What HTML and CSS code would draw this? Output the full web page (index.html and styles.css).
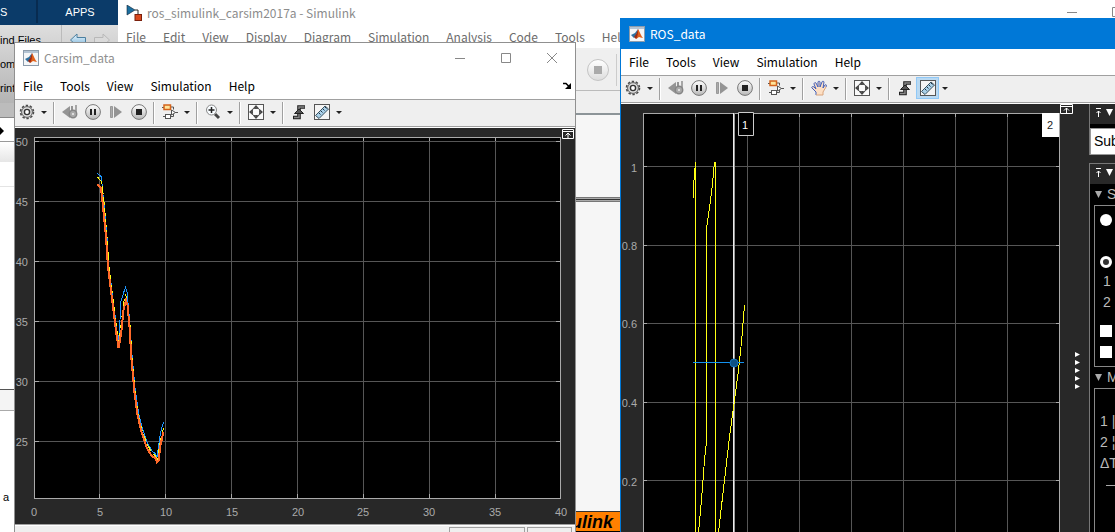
FILE: index.html
```html
<!DOCTYPE html>
<html lang="en">
<head>
<meta charset="utf-8">
<title>ros_simulink_carsim2017a - Simulink</title>
<link rel="stylesheet" href="styles.css">
</head>
<body>
<svg class="defs" aria-hidden="true">
  <defs>
    <linearGradient id="btn" x2="0" y2="1"><stop offset="0" stop-color="#fff"/><stop offset="1" stop-color="#b8b8b8"/></linearGradient>
    <linearGradient id="blue" x2="0" y2="1"><stop offset="0" stop-color="#e8f6ff"/><stop offset="1" stop-color="#7fb4d8"/></linearGradient>
    <symbol id="matlab" viewBox="0 0 16 16"><rect x=".5" y=".5" width="15" height="15" fill="#f4f6f8" stroke="#8c9cac"/><path d="M1 1h14v2H1z" fill="#b4c4d4"/><path d="M2 9l4-2 3-4-2 7-2 2z" fill="#2d6f9e"/><path d="M9 3c-1 3-2 6-4 8l2 2c2-1 3-4 3-7z" fill="#9c2a12"/><path d="M9 3c2 3 3 7 5 9-2 0-3-1-4-1l-3 2c2-3 2-6 2-10z" fill="#e0601a"/></symbol>
    <symbol id="gear" viewBox="0 0 16 16"><circle cx="8" cy="8" r="6.500" fill="none" stroke="#4a4a4a" stroke-width="1.600" stroke-dasharray="2.4 1.68"/><circle cx="8" cy="8" r="5.400" fill="#ddd" stroke="#5a5a5a"/><circle cx="8" cy="8" r="2.600" fill="#fff" stroke="#333" stroke-width="1.400"/></symbol>
    <symbol id="back" viewBox="0 0 16 16"><path d="M0 8l8-6v12z" fill="#949494"/><path d="M9 2h2v5H9z" fill="#949494"/><path d="M13 1h2v7h-2z" fill="#a6a6a6"/><circle cx="11" cy="10" r="3.700" fill="#aaa" stroke="#858585" stroke-width="1.500"/><circle cx="11" cy="10" r="1" fill="#eee"/></symbol>
    <symbol id="pause" viewBox="0 0 16 16"><circle cx="8" cy="8" r="7.400" fill="url(#btn)" stroke="#777"/><path d="M5 5h2v6H5zM9 5h2v6H9z" fill="#222"/></symbol>
    <symbol id="step" viewBox="0 0 16 16"><path d="M2.500 2.500h2v11h-2z" fill="#aaa" stroke="#999"/><path d="M6 2l8 6-8 6z" fill="#949494"/></symbol>
    <symbol id="stop" viewBox="0 0 16 16"><circle cx="8" cy="8" r="7.400" fill="url(#btn)" stroke="#777"/><path d="M5 5h6v6H5z" fill="#222"/></symbol>
    <symbol id="blocks" viewBox="0 0 16 16"><path d="M8 3h3.500v2.500M13 8.500h3M11.500 10v2.500H8M1 12.500h3M0 3.500h2" fill="none" stroke="#555"/><rect x="2" y="1" width="6.500" height="4.500" fill="#ffe49a" stroke="#d4641c" stroke-width="1.500"/><rect x="3.500" y="10.500" width="5" height="4" fill="#fff" stroke="#555"/><path d="M9.500 6l4 2.500-4 2.500z" fill="#fff" stroke="#555"/></symbol>
    <symbol id="zoomin" viewBox="0 0 16 16"><path d="M10 10l4 4" stroke="#444" stroke-width="3"/><circle cx="6.500" cy="6" r="5" fill="#f8fcff" stroke="#888"/><path d="M6.500 3v6M3.500 6h6" stroke="#222" stroke-width="1.500"/></symbol>
    <symbol id="hand" viewBox="0 0 16 16"><path d="M5 15v-3L1 8c-1-1 1-2 2-1l2 2-2-5c0-1 1-2 2-1l2 4V2c0-1 2-1 2 0v5l2-5c0-1 2-1 2 0l-1 6 2-3c1-1 2 0 1 2l-3 5v3z" fill="#fddfc4"/><path d="M5 15v-3L1 8c-1-1 1-2 2-1l2 2-2-5c0-1 1-2 2-1l2 4V2c0-1 2-1 2 0v5l2-5c0-1 2-1 2 0l-1 6 2-3c1-1 2 0 1 2" fill="none" stroke="#4460b8"/><path d="M15 7l-3 5v3H5" fill="none" stroke="#d8a47c"/></symbol>
    <symbol id="fit" viewBox="0 0 16 16"><rect x=".5" y=".5" width="15" height="15" fill="#fafafa" stroke="#555"/><path d="M8 1l3.500 4h-7zM8 15l3.500-4h-7zM1 8l4-3.500v7zM15 8l-4-3.500v7z" fill="#444"/><circle cx="8" cy="8" r="4" fill="none" stroke="#777" stroke-dasharray="1 1"/></symbol>
    <symbol id="trigger" viewBox="0 0 16 16"><path d="M2 13.500h6V3h6" fill="none" stroke="#222" stroke-width="3.600"/><path d="M3 13.500h5V3h5.500" fill="none" stroke="#888" stroke-width="1.400"/><path d="M3.500 9.500L8 5l4.500 4.500z" fill="#555" stroke="#222"/></symbol>
    <symbol id="ruler" viewBox="0 0 16 16"><rect x=".5" y=".5" width="15" height="15" fill="#f4f4f4" stroke="#555"/><path d="M1.500 11.500L11 2l3.500 3L5 14.500z" fill="#a9d0e8" stroke="#39505e"/><path d="M5 9l1.500 1.500M7 7l1.500 1.500M9 5l1.500 1.500M11 3l1.500 1.500" stroke="#234"/></symbol>
    <symbol id="simulink" viewBox="0 0 16 16"><path d="M1 0v10l8-5z" fill="#1b6fa0" stroke="#123" stroke-width=".6"/><path d="M9 5h3v4" fill="none" stroke="#222"/><rect x="9" y="9.500" width="6.500" height="6" fill="#d8481c" stroke="#7a200c"/></symbol>
  </defs>
</svg>

<main class="desktop">
  <section class="window matlab" aria-label="Command desktop">
    <nav class="tabs"><button class="tab tab-first">S</button><button class="tab">APPS</button></nav>
    <div class="strip">
      <div class="strip-list"><button>ind Files</button><button>om</button><button>rint</button></div>
      <div class="history">
        <svg width="16" height="14" viewBox="0 0 16 14"><path d="M.5 7L7 1v3.500h8.500v5H7V13z" fill="url(#blue)" stroke="#4c7f9f"/></svg>
        <svg width="16" height="14" viewBox="0 0 16 14"><path d="M15.500 7L9 1v3.500H.5v5H9V13z" fill="#dadada" stroke="#b8b8b8"/></svg>
      </div>
    </div>
    <div class="address"><svg width="5" height="8" viewBox="0 0 5 8"><path d="M0 0l4 4-4 4z"/></svg></div>
    <div class="pane-head"></div>
    <div class="pane"><div class="pane-row"></div></div>
    <div class="pane-head pane-head-dark"></div>
    <div class="pane-text">a</div>
  </section>

  <section class="window simulink" aria-label="Simulink">
    <header class="simulink-title"><svg width="16" height="16"><use href="#simulink"/></svg><h1>ros_simulink_carsim2017a - Simulink</h1>
      <svg class="simulink-controls" width="60" height="14" viewBox="0 0 60 14"><path d="M12 6.500h10M57.500 1.500h10v9h-10z" fill="none" stroke="#888"/></svg>
    </header>
    <nav class="simulink-menu"><button>File</button><button>Edit</button><button>View</button><button>Display</button><button>Diagram</button><button>Simulation</button><button>Analysis</button><button>Code</button><button>Tools</button><button>Help</button></nav>
    <div class="simulink-tools"><button class="round" aria-label="Stop"><span></span></button><i></i></div>
    <div class="simulink-path"></div>
    <div class="canvas-top"></div>
    <div class="canvas-split"></div>
    <div class="canvas"></div>
    <div class="banner"><b>ulink</b></div>
    <div class="banner-foot"></div>
  </section>

  <section class="window scope carsim" aria-label="Carsim_data">
    <header class="title"><svg width="16" height="16"><use href="#matlab"/></svg><h2>Carsim_data</h2>
      <div class="controls">
        <button aria-label="Minimize"><svg width="12" height="12"><path d="M1 6.500h10" stroke="#888"/></svg></button>
        <button aria-label="Maximize"><svg width="12" height="12"><path d="M1.500 1.500h9v9h-9z" fill="none" stroke="#888"/></svg></button>
        <button aria-label="Close"><svg width="12" height="12"><path d="M1 1l10 10M11 1L1 11" stroke="#888"/></svg></button>
      </div>
    </header>
    <nav class="menu"><button>File</button><button>Tools</button><button>View</button><button>Simulation</button><button>Help</button>
      <svg class="dock" width="8" height="8" viewBox="0 0 8 8"><path d="M0 1.500h3l3 3" fill="none" stroke="#000" stroke-width="1.500"/><path d="M8 1v6H2z"/></svg>
    </nav>
    <div class="toolbar">
      <button class="tool" aria-label="Settings"><svg width="16" height="16"><use href="#gear"/></svg></button><button class="drop" aria-label="Settings menu"></button><i></i>
      <button class="tool" aria-label="Step back"><svg width="16" height="16"><use href="#back"/></svg></button><button class="tool" aria-label="Pause"><svg width="16" height="16"><use href="#pause"/></svg></button><button class="tool" aria-label="Step"><svg width="16" height="16"><use href="#step"/></svg></button><button class="tool" aria-label="Stop"><svg width="16" height="16"><use href="#stop"/></svg></button><i></i>
      <button class="tool" aria-label="Highlight block"><svg width="16" height="16"><use href="#blocks"/></svg></button><button class="drop" aria-label="Block menu"></button><i></i>
      <button class="tool" aria-label="Zoom"><svg width="16" height="16"><use href="#zoomin"/></svg></button><button class="drop" aria-label="Zoom menu"></button><i></i>
      <button class="tool" aria-label="Scale axes"><svg width="16" height="16"><use href="#fit"/></svg></button><button class="drop" aria-label="Scale menu"></button><i></i>
      <button class="tool" aria-label="Trigger"><svg width="16" height="16"><use href="#trigger"/></svg></button><button class="tool" aria-label="Cursor measurements"><svg width="16" height="16"><use href="#ruler"/></svg></button><button class="drop" aria-label="Measurement menu"></button>
    </div>
    <svg class="plot" viewBox="15 128 560 396" role="img" aria-label="Carsim data plot">
      <path d="M34 137h527v362H34z" fill="#000"/>
      <path class="grid" d="M99.500 137v361M165.500 137v361M231.500 137v361M297.500 137v361M363.500 137v361M429.500 137v361M495.500 137v361M34 141.500h527M34 201.500h527M34 261.500h527M34 321.500h527M34 381.500h527M34 441.500h527"/>
      <path class="axis" d="M34.500 137.500h526v361h-526zM99.500 137v4M165.500 137v4M231.500 137v4M297.500 137v4M363.500 137v4M429.500 137v4M495.500 137v4M99.500 494v4M165.500 494v4M231.500 494v4M297.500 494v4M363.500 494v4M429.500 494v4M495.500 494v4M34 141.500h5M34 201.500h5M34 261.500h5M34 321.500h5M34 381.500h5M34 441.500h5M556 141.500h5M556 201.500h5M556 261.500h5M556 321.500h5M556 381.500h5M556 441.500h5"/>
      <path class="curve blue" d="M97.500 173.500L101.500 177 102.500 190 104.500 209 107 237 109 267 111.500 287 114 307 117 331 118.500 343 120 320 120.500 303 123.500 293 125.500 287.500 127 292 130 325 132 355 135 388 138.500 413 142 427 147 442 152 451 155.500 454 157 457 158.500 447 160.500 433 163.500 422"/>
      <path class="curve yellow" d="M97.500 177L101 181 102.500 188 104.500 207 107 237 109 267 111.500 287 114 307 117 331 118.500 345 121 325 123.500 304 125.500 294 127.500 303 130 325 132 357 135 391 138 414 142 430 147 444 152 453 155.500 456 157.500 459 160.500 440 163.500 428"/>
      <path class="curve orange" d="M97.500 184L101 188 103 207 106 237 108 267 110.500 287 113 307 116 331 118.500 348 119.500 343 121.500 330 123.500 310 126 300 127.500 305 129.500 327 131.500 360 134.500 393 137.500 415 141.500 432 146.500 447 151.500 456 155.500 458 157 462 158.500 461 160.500 445 163.500 432"/>
      <g class="ticks end"><text x="28" y="146">50</text><text x="28" y="206">45</text><text x="28" y="266">40</text><text x="28" y="326">35</text><text x="28" y="386">30</text><text x="28" y="446">25</text></g>
      <g class="ticks mid"><text x="34" y="516">0</text><text x="100" y="516">5</text><text x="166" y="516">10</text><text x="232" y="516">15</text><text x="298" y="516">20</text><text x="363" y="516">25</text><text x="429" y="516">30</text><text x="495" y="516">35</text><text x="561" y="516">40</text></g>
      <path class="pin" d="M562.500 129.500h11v9h-11zM562 131.500h11M568 138v-5M565.500 135.500l2.500-2.500 2.500 2.500"/>
    </svg>
    <footer class="status"><span class="well wide"></span><span class="well"></span></footer>
  </section>

  <section class="window scope ros" aria-label="ROS_data">
    <header class="title"><svg width="16" height="16"><use href="#matlab"/></svg><h2>ROS_data</h2></header>
    <nav class="menu"><button>File</button><button>Tools</button><button>View</button><button>Simulation</button><button>Help</button></nav>
    <div class="toolbar">
      <button class="tool" aria-label="Settings"><svg width="16" height="16"><use href="#gear"/></svg></button><button class="drop" aria-label="Settings menu"></button><i></i>
      <button class="tool" aria-label="Step back"><svg width="16" height="16"><use href="#back"/></svg></button><button class="tool" aria-label="Pause"><svg width="16" height="16"><use href="#pause"/></svg></button><button class="tool" aria-label="Step"><svg width="16" height="16"><use href="#step"/></svg></button><button class="tool" aria-label="Stop"><svg width="16" height="16"><use href="#stop"/></svg></button><i></i>
      <button class="tool" aria-label="Highlight block"><svg width="16" height="16"><use href="#blocks"/></svg></button><button class="drop" aria-label="Block menu"></button><i></i>
      <button class="tool" aria-label="Pan"><svg width="16" height="16"><use href="#hand"/></svg></button><button class="drop" aria-label="Pan menu"></button><i></i>
      <button class="tool" aria-label="Scale axes"><svg width="16" height="16"><use href="#fit"/></svg></button><button class="drop" aria-label="Scale menu"></button><i></i>
      <button class="tool" aria-label="Trigger"><svg width="16" height="16"><use href="#trigger"/></svg></button><button class="tool active" aria-label="Cursor measurements"><svg width="16" height="16"><use href="#ruler"/></svg></button><button class="drop" aria-label="Measurement menu"></button>
    </div>
    <div class="ros-body">
      <svg class="plot" viewBox="621 104 468 428" role="img" aria-label="ROS data plot">
        <path d="M643 113h416v419H643z" fill="#000"/>
        <path class="grid" d="M695.500 113v419M747.500 113v419M799.500 113v419M851.500 113v419M903.500 113v419M955.500 113v419M1007.500 113v419M643 166.500h416M643 245.500h416M643 323.500h416M643 402.500h416M643 480.500h416"/>
        <path class="axis" d="M643.500 532V113.500h416V532M695.500 113v4M747.500 113v4M799.500 113v4M851.500 113v4M903.500 113v4M955.500 113v4M1007.500 113v4M643 166.500h4M643 245.500h4M643 323.500h4M643 402.500h4M643 480.500h4M1056 166.500h4M1056 245.500h4M1056 323.500h4M1056 402.500h4M1056 480.500h4"/>
        <path d="M733 113h1v419h-1z" fill="#eee"/><path d="M734 113h1v419h-1z" fill="#999"/>
        <path class="curve yellow-line" d="M693.500 198V187L694.500 174 695.500 162V532M698.500 532L701.500 500 704.500 460 706.500 441V229L709.500 208 712.500 184 714.500 162H715.500V532M718.500 532L724.500 480 729.500 437 734.500 400 738.500 370 741.500 342 744.500 305"/>
        <path d="M693 362.500h51" stroke="#1492ef"/><circle cx="734" cy="363" r="4" fill="#0d5184" stroke="#1272b8"/>
        <path d="M738.500 112.500h15v23h-15z" fill="#000" stroke="#ccc"/><path d="M1042 113h17v24h-17z" fill="#fff"/>
        <text class="cursor-label" x="745" y="129" fill="#fff">1</text><text class="cursor-label" x="1050" y="129" fill="#222">2</text>
        <g class="ticks end"><text x="637" y="172">1</text><text x="637" y="250">0.8</text><text x="637" y="328">0.6</text><text x="637" y="407">0.4</text><text x="637" y="486">0.2</text></g>
        <path class="pin" d="M1060.500 104.500h12v9h-12zM1060 106.500h12M1066.500 113v-5M1064 110.500l2.500-2.500 2.500 2.500"/>
        <path d="M1075 352l5 2.500-5 2.500zM1075 360l5 2.500-5 2.500zM1075 368l5 2.500-5 2.500zM1075 376l5 2.500-5 2.500zM1075 384l5 2.500-5 2.500z" fill="#fff"/>
      </svg>
      <aside class="side">
        <section class="side-box trace">
          <div class="side-head"><svg width="5" height="9"><path d="M0 .5h5M2.500 9V3M.5 5l2-2 2 2" fill="none" stroke="#fff"/></svg><svg width="7" height="7"><path d="M0 0h7L3.500 7z" fill="#fff"/></svg></div>
          <select aria-label="Trace"><option>Sub</option></select>
        </section>
        <section class="side-box">
          <div class="side-head"><svg width="5" height="9"><path d="M0 .5h5M2.500 9V3M.5 5l2-2 2 2" fill="none" stroke="#fff"/></svg><svg width="7" height="7"><path d="M0 0h7L3.500 7z" fill="#fff"/></svg></div>
          <h3><svg width="7" height="7"><path d="M0 0h7L3.500 7z" fill="#aaa"/></svg>S</h3>
          <div class="group settings">
            <input type="radio" name="cursor" aria-label="Screen cursors">
            <input type="radio" name="cursor" aria-label="Waveform cursors" checked>
            <label>1<input class="line-source" aria-label="Cursor 1 source"></label>
            <label>2<input class="line-source" aria-label="Cursor 2 source"></label>
            <input type="checkbox" aria-label="Lock spacing"><input type="checkbox" aria-label="Snap to data">
          </div>
          <h3><svg width="7" height="7"><path d="M0 0h7L3.500 7z" fill="#aaa"/></svg>M</h3>
          <div class="group measures"><span>1 |</span><span>2 ¦</span><span>ΔT</span><hr></div>
        </section>
      </aside>
    </div>
  </section>
</main>
</body>
</html>
```

FILE: styles.css
```css
* { box-sizing: border-box; }
body { margin: 0; overflow: hidden; font: 12px/16px "Noto Sans CJK SC", "Noto Sans", sans-serif; color: #000; }
button { border: 0; padding: 0; background: none; font: inherit; color: inherit; white-space: nowrap; }
h1, h2, h3 { margin: 0; font: inherit; }
svg { flex: none; display: block; }
.defs { position: absolute; width: 0; height: 0; }
.desktop { position: relative; height: 100vh; overflow: hidden; background: #fff; }
.window { position: absolute; bottom: 0; overflow: hidden; display: flex; flex-direction: column; background: #fff; }

/* Command desktop */
.matlab { left: 0; top: 0; width: 118px; font: 11px/16px "Liberation Sans", Arial, sans-serif; }
.tabs { display: flex; height: 25px; padding-bottom: 2px; background: #0b3b69; color: #fff; }
.tab { flex: 1; padding-left: 4px; border-left: 2px solid #082b50; }
.tab-first { flex: none; width: 36px; padding: 0; border: 0; text-align: left; }
.strip { display: flex; height: 78px; background: linear-gradient(#dedede, #b4b4b4); }
.strip-list { display: flex; flex-direction: column; align-items: flex-start; gap: 8px; width: 63px; padding-top: 7px; }
.history { display: flex; gap: 8px; padding: 8px; height: 34px; border-left: 1px solid #bbb; }
.address { height: 38px; padding-top: 24px; background: linear-gradient(#bcbcbc 14px, #888 14px, #888 15px, #fff 15px); }
.pane-head { height: 21px; border-top: 1px solid #999; background: linear-gradient(#fff, #e6e6e6); }
.pane { height: 227px; padding-top: 24px; }
.pane-row { border-top: 1px solid #e4e4e4; }
.pane-head-dark { height: 22px; border-top-color: #555; border-bottom: 1px solid #aaa; background: #f4f4f4; }
.pane-text { padding: 78px 3px 0; }

/* Simulink editor */
.simulink { left: 118px; right: 0; top: 0; color: #6c6c6c; }
.simulink-title { display: flex; align-items: center; gap: 5px; height: 26px; padding-left: 8px; color: #8c8c8c; }
.simulink-controls { margin-left: auto; }
.simulink-menu { display: flex; gap: 17px; height: 24px; padding-left: 8px; align-items: center; border-bottom: 2px solid #f0f0f0; }
.simulink-tools { display: flex; align-items: center; gap: 7px; height: 41px; padding-left: 469px; background: #efefef; border-bottom: 1px solid #bbb; }
.simulink-tools i { height: 32px; border-left: 1px solid #ccc; }
.round { display: grid; place-items: center; width: 22px; height: 22px; border: 1px solid #c4c4c4; border-radius: 50%; background: linear-gradient(#fff, #ddd); }
.round span { width: 8px; height: 8px; background: #aaa; }
.simulink-path { height: 24px; background: #efefef; border-bottom: 2px solid #8c9498; }
.canvas-top { height: 82px; background: #f6f6f6; }
.canvas-split { height: 5px; background: #aaa; border-top: 1px solid #777; border-bottom: 1px solid #777; }
.canvas-split::after { content: ""; display: block; margin-top: 1px; height: 1px; background: #333; }
.canvas { flex: 1; background: #f6f6f6; }
.banner { height: 20px; padding-left: 453px; border-top: 1px solid #333; background: #ff8000; color: #000; font: italic bold 18px/20px "Liberation Sans", Arial, sans-serif; }
.banner-foot { height: 1px; background: #000; }

/* Scope windows */
.carsim { left: 14px; top: 42px; width: 562px; border: 1px solid #909090; border-bottom: 0; }
.ros { left: 620px; right: 0; top: 18px; border-left: 1px solid #0078d7; }
.title { display: flex; flex: none; align-items: center; gap: 5px; height: 30px; padding-left: 8px; color: #909090; }
.ros .title { height: 31px; background: #0078d7; color: #fff; }
.controls { display: flex; gap: 34px; margin-left: auto; padding-right: 17px; }
.menu { display: flex; flex: none; align-items: center; gap: 17px; height: 26px; padding: 0 4px 0 8px; }
.dock { margin-left: auto; }
.toolbar { display: flex; flex: none; align-items: flex-start; height: 29px; padding-top: 1px; background: #efefef; border-top: 1px solid #a0a0a0; border-bottom: 1px solid #fff; box-shadow: inset 0 -1px #a0a0a0; }
.toolbar i { width: 2px; height: 22px; margin: 1px 3px 0; border-left: 1px solid #a0a0a0; border-right: 1px solid #fff; }
.tool { display: grid; place-items: center; width: 23px; height: 22px; }
.tool.active { background: #b9d9f2; border: 1px solid #90c8f6; }
.drop { display: grid; place-items: center; width: 12px; height: 22px; }
.drop::after { content: ""; border: 3px solid transparent; border-top: 3px solid #222; border-bottom: 0; }
.plot { width: 100%; background: #282828; }
.grid { fill: none; stroke: #565656; shape-rendering: crispEdges; }
.axis { fill: none; stroke: #aaa; shape-rendering: crispEdges; }
.curve { fill: none; shape-rendering: crispEdges; }
.blue { stroke: #1c97ff; }
.yellow { stroke: #ffff14; stroke-dasharray: 8 3; }
.yellow-line { stroke: #ffff14; }
.orange { stroke: #ff6929; stroke-width: 2; }
.pin { fill: none; stroke: #fff; }
.ticks { fill: #aaa; font: 11px "Liberation Sans", Arial, sans-serif; }
.end { text-anchor: end; }
.mid { text-anchor: middle; }
.cursor-label { font: 11px "Liberation Sans", Arial, sans-serif; text-anchor: middle; }
.status { display: flex; flex: 1; justify-content: flex-end; gap: 2px; padding: 2px 3px 0 0; background: #efefef; border-top: 1px solid #a0a0a0; box-shadow: inset 0 1px #fff; }
.well { width: 45px; height: 20px; border: 1px solid #a0a0a0; }
.wide { width: 76px; }

/* Measurement panel */
.ros-body { display: grid; flex: 1; grid-template-columns: 1fr 26px; background: #282828; }
.side { overflow: hidden; color: #bbb; font: 14px/21px "Liberation Sans", Arial, sans-serif; }
.side-box { border-left: 1px solid #777; background: #000; }
.side-head { display: flex; align-items: center; gap: 5px; height: 20px; padding: 0 0 3px 6px; background: #282828; }
.trace { margin-bottom: 8px; }
.trace select { display: block; width: 60px; height: 27px; margin-top: 4px; padding: 0 3px; border: 1px solid #999; border-radius: 0; appearance: none; background: #fff; color: #000; font: inherit; }
.trace + .side-box { border-top: 1px solid #777; height: 400px; }
.side h3 { display: flex; align-items: center; gap: 5px; height: 21px; padding-left: 5px; }
.group { width: 60px; margin-left: 4px; border: 1px solid #888; }
.settings { display: flex; flex-direction: column; align-items: flex-start; height: 162px; padding: 8px 5px; }
.settings input { flex: none; appearance: none; width: 12px; height: 12px; margin: 0 0 9px; background: #fff; }
.settings input[type="radio"] { border-radius: 50%; margin-bottom: 30px; }
.settings input[type="radio"]:checked { border: 3px solid #fff; background: #333; margin-bottom: 3px; }
.settings label { display: flex; align-items: center; gap: 4px; height: 21px; padding-left: 3px; }
.settings label + input { margin-top: 12px; }
.settings .line-source { width: 40px; height: 18px; margin: 0; border: 0; background: #000060; }
.measures { display: flex; flex-direction: column; height: 160px; padding: 22px 5px; white-space: nowrap; }
.measures hr { width: 40px; margin: 11px 6px; border: 0; border-top: 1px solid #aaa; }
```
